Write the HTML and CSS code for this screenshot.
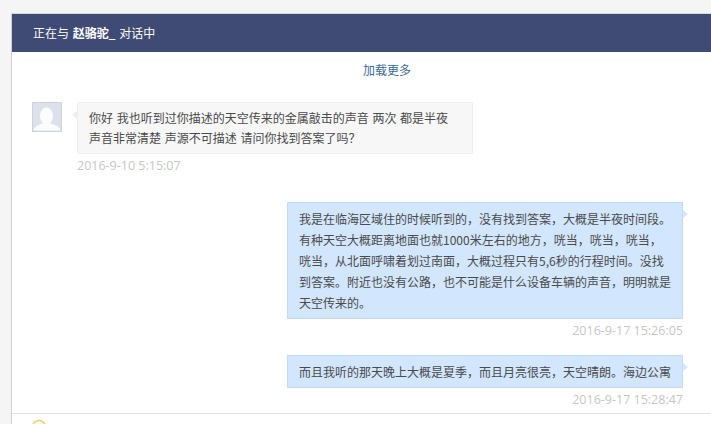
FILE: index.html
```html
<!DOCTYPE html>
<html lang="zh-CN">
<head>
  <meta charset="UTF-8">
  <title>对话</title>
  <link rel="stylesheet" href="styles.css">
</head>
<body>
  <div class="panel">
    <div class="panel-head">正在与 <b>赵骆驼_</b> 对话中</div>

    <div class="messages">
      <a class="load-more">加载更多</a>

      <div class="msg msg-left">
        <svg class="avatar" width="30" height="30" viewBox="0 0 30 30">
          <rect x="0.5" y="0.5" width="29" height="29" fill="#dde1ec" stroke="#cfd2d8"/>
          <ellipse cx="14.5" cy="14" rx="6.5" ry="8.5" fill="#fbfcfe"/>
          <path d="M1.5 28.5c1-5 7-6 10-7.500h6c3 1.500 10 2.500 11 7.500z" fill="#fbfcfe"/>
        </svg>
        <div class="msg-body">
          <div class="bubble">你好 我也听到过你描述的天空传来的金属敲击的声音 两次 都是半夜<br>声音非常清楚 声源不可描述 请问你找到答案了吗？</div>
          <div class="time">2016-9-10 5:15:07</div>
        </div>
      </div>

      <div class="msg msg-right">
        <div class="msg-body">
          <div class="bubble">我是在临海区域住的时候听到的，没有找到答案，大概是半夜时间段。有种天空大概距离地面也就1000米左右的地方，咣当，咣当，咣当，咣当，从北面呼啸着划过南面，大概过程只有5,6秒的行程时间。没找到答案。附近也没有公路，也不可能是什么设备车辆的声音，明明就是天空传来的。</div>
          <div class="time">2016-9-17 15:26:05</div>
        </div>
      </div>

      <div class="msg msg-right">
        <div class="msg-body">
          <div class="bubble">而且我听的那天晚上大概是夏季，而且月亮很亮，天空晴朗。海边公寓</div>
          <div class="time">2016-9-17 15:28:47</div>
        </div>
      </div>
    </div>

    <div class="toolbar">
      <svg width="16" height="16" viewBox="0 0 16 16">
        <circle cx="8" cy="8" r="6.5" fill="#fffbe8" stroke="#e9cf78" stroke-width="1.5"/>
      </svg>
    </div>
  </div>
</body>
</html>
```

FILE: styles.css
```css
* {
  margin: 0;
  padding: 0;
  box-sizing: border-box;
}

html, body {
  height: 424px;
  overflow: hidden;
}

body {
  font-family: "Noto Sans CJK SC", "Liberation Sans", sans-serif;
  font-size: 12px;
  color: #4a4a4a;
  background-color: #f5f5f5;
  padding: 13px 0 0 11px;
}

.panel {
  width: 700px;
  background-color: #fff;
  border-top: 1px solid #d5d8e0;
  border-left: 1px solid #cfcfcf;
}

.panel-head {
  height: 38px;
  line-height: 38px;
  padding-left: 21px;
  font-size: 12px;
  word-spacing: 1px;
  color: #fff;
  background-color: #3f4a75;
}

.messages {
  height: 362px;
  overflow: hidden;
  border-bottom: 1px solid #e3e3e3;
}

.load-more {
  display: block;
  height: 50px;
  padding: 8px 0 0 351px;
  line-height: 20px;
  color: #3b6a9c;
}

.msg {
  display: flex;
  gap: 15px;
}

.msg-left {
  padding-left: 20px;
  margin-bottom: 28px;
}

.msg-right {
  justify-content: flex-end;
  padding-right: 28px;
  margin-bottom: 16px;
}

.avatar {
  flex: none;
}

.msg-body {
  width: 396px;
}

.bubble {
  position: relative;
  padding: 5px 11px;
  line-height: 21px;
  border: 1px solid #eeeeee;
  background-color: #f7f7f7;
}

.msg-left .bubble {
  line-height: 20px;
  word-spacing: 1px;
}

.msg-left .bubble::before {
  content: "";
  position: absolute;
  left: -6px;
  top: 8px;
  border-top: 4px solid transparent;
  border-bottom: 4px solid transparent;
  border-right: 5px solid #eeeeee;
}

.msg-right .bubble {
  background-color: #d2e6fd;
  border-color: #c5daf3;
}

.msg-right .bubble::after {
  content: "";
  position: absolute;
  right: -6px;
  top: 7px;
  border-top: 4px solid transparent;
  border-bottom: 4px solid transparent;
  border-left: 5px solid #d2e6fd;
}

.time {
  margin-top: 4px;
  line-height: 16px;
  font-size: 12.5px;
  font-family: "Open Sans", "Liberation Sans", sans-serif;
  color: #c6c6c6;
}

.msg-right .time {
  text-align: right;
}

.toolbar {
  padding: 5px 0 0 19px;
  line-height: 0;
}
```
